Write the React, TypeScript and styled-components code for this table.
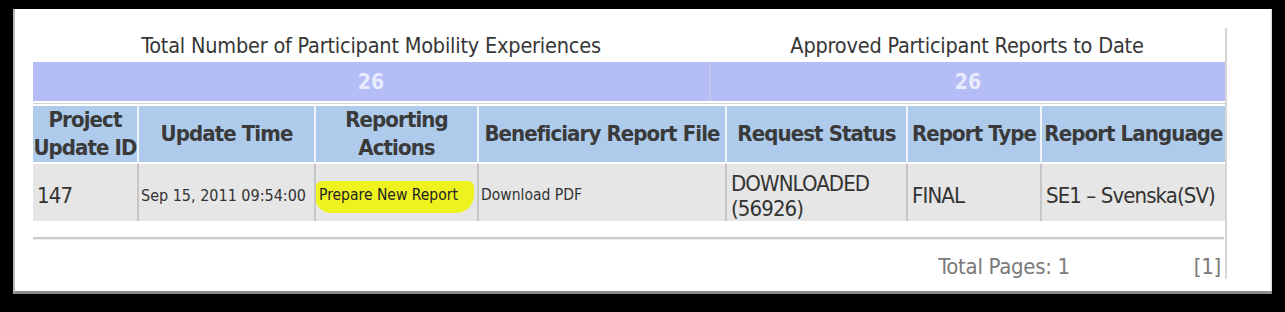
import React from 'react';
import styled, { createGlobalStyle } from 'styled-components';

const GlobalStyle = createGlobalStyle`
  html, body {
    margin: 0;
    padding: 0;
    background: #000;
  }
  body {
    width: 1285px;
    height: 312px;
    overflow: hidden;
    font-family: "DejaVu Sans Condensed", "DejaVu Sans", sans-serif;
  }
`;

const Panel = styled.div`
  margin: 9px 0 0 13px;
  width: 1259px;
  height: 285px;
  box-sizing: border-box;
  background: #fff;
  border-left: 2px solid #b8b8b8;
  border-bottom: 3px solid #8c8c8c;
  box-shadow: inset -3px 0 2px -2px #d0d0d0;
  padding: 19px 0 0 18px;
`;

const Frame = styled.div`
  width: 1194px;
  height: 251px;
  box-sizing: border-box;
  border-right: 2px solid #d6d6d6;
  overflow: hidden;
`;

const Summary = styled.div`
  display: grid;
  grid-template-columns: 676px 516px;
  grid-template-rows: 34px 39px;
`;

const SummaryTitle = styled.div`
  font-size: 21.5px;
  letter-spacing: -0.2px;
  line-height: 36px;
  color: #363636;
  text-align: center;
  white-space: nowrap;
`;

const SummaryCount = styled.div<{ $divider?: boolean }>`
  background: #b4bdf5;
  color: #e9ecff;
  font-weight: bold;
  font-size: 21px;
  line-height: 40px;
  text-align: center;
  border-left: ${p => (p.$divider ? '2px solid #c3c6e4' : 'none')};
`;

const Divider = styled.div`
  height: 1px;
  margin: 2px 0 2px;
  background: #d2d5dc;
`;

const Table = styled.table`
  table-layout: fixed;
  width: 1192px;
  border-collapse: collapse;
  border-spacing: 0;
`;

const Th = styled.th`
  box-sizing: border-box;
  height: 56px;
  padding: 0;
  background: #aecbec;
  color: #3a3a3a;
  font-size: 22px;
  letter-spacing: -0.9px;
  font-weight: bold;
  line-height: 28px;
  text-align: center;
  white-space: nowrap;
  overflow: hidden;
  border-right: 2px solid #eef3fa;
  &:last-child {
    border-right: none;
  }
`;

const Td = styled.td<{ $small?: boolean }>`
  box-sizing: border-box;
  height: 58px;
  padding: 6px 0 0 ${p => (p.$small ? '2px' : '4px')};
  background: #e6e6e6;
  color: #333;
  font-size: ${p => (p.$small ? '15.5px' : '22px')};
  letter-spacing: ${p => (p.$small ? '0' : '-0.9px')};
  line-height: 25px;
  vertical-align: middle;
  white-space: ${p => (p.$small ? 'nowrap' : 'normal')};
  overflow: hidden;
  border-top: 2px solid #fff;
  border-right: 2px solid #c6c6c6;
  &:last-child {
    border-right: none;
  }
`;

const DateText = styled.span`
  font-size: 16px;
`;

const Highlight = styled.span`
  display: inline-block;
  vertical-align: middle;
  margin: 2px 0 0 -3px;
  padding: 2px 16px 5px 4px;
  background: #eef21e;
  border-radius: 8px 6px 18px 16px;
  color: #222;
`;

const Rule = styled.div`
  width: 1191px;
  height: 2px;
  margin-top: 16px;
  background: #cdcdcd;
  border-bottom: 1px solid #efefef;
`;

const Footer = styled.div`
  display: flex;
  justify-content: flex-end;
  gap: 124px;
  margin-top: 15px;
  padding-right: 4px;
  font-size: 22px;
  letter-spacing: -0.3px;
  line-height: 24px;
  color: #7a7a7a;
`;

const columns = [105, 177, 163, 248, 181, 134, 184];

export default function App() {
  return (
    <>
      <GlobalStyle />
      <Panel>
        <Frame>
          <Summary>
            <SummaryTitle>Total Number of Participant Mobility Experiences</SummaryTitle>
            <SummaryTitle>Approved Participant Reports to Date</SummaryTitle>
            <SummaryCount>26</SummaryCount>
            <SummaryCount $divider>26</SummaryCount>
          </Summary>
          <Divider />
          <Table>
            <colgroup>
              {columns.map((w, i) => (
                <col key={i} style={{ width: w }} />
              ))}
            </colgroup>
            <thead>
              <tr>
                <Th>Project<br />Update ID</Th>
                <Th>Update Time</Th>
                <Th>Reporting<br />Actions</Th>
                <Th>Beneficiary Report File</Th>
                <Th>Request Status</Th>
                <Th>Report Type</Th>
                <Th>Report Language</Th>
              </tr>
            </thead>
            <tbody>
              <tr>
                <Td>147</Td>
                <Td $small><DateText>Sep 15, 2011 09:54:00</DateText></Td>
                <Td $small><Highlight>Prepare New Report</Highlight></Td>
                <Td $small>Download PDF</Td>
                <Td>DOWNLOADED (56926)</Td>
                <Td>FINAL</Td>
                <Td>SE1 – Svenska(SV)</Td>
              </tr>
            </tbody>
          </Table>
          <Rule />
          <Footer>
            <span>Total Pages: 1</span>
            <span>[1]</span>
          </Footer>
        </Frame>
      </Panel>
    </>
  );
}
